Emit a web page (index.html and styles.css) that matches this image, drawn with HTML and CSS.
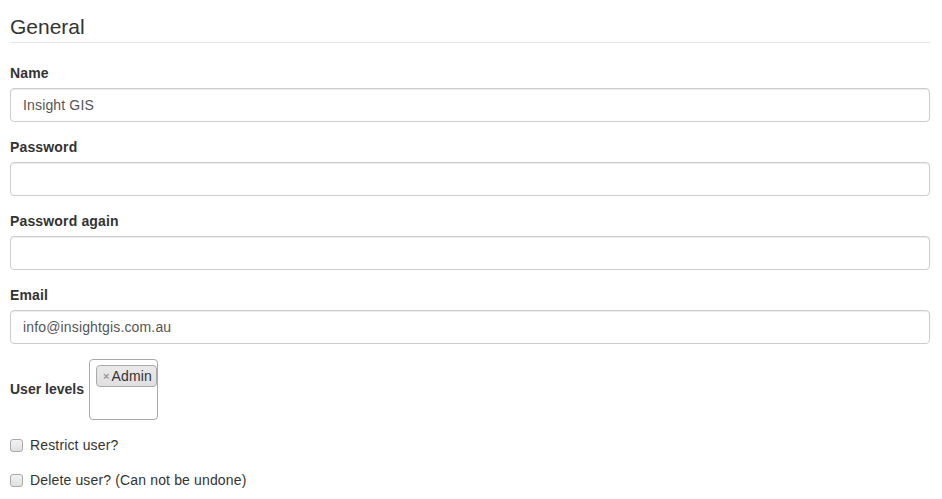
FILE: index.html
```html
<!DOCTYPE html>
<html lang="en">
<head>
<meta charset="utf-8">
<title>General</title>
<link rel="stylesheet" href="styles.css">
</head>
<body>
<form class="form">
  <fieldset class="fieldset">
    <legend class="legend">General</legend>
    <div class="form-group">
      <label class="label" for="name">Name</label>
      <input class="input" id="name" type="text" value="Insight GIS">
    </div>
    <div class="form-group">
      <label class="label" for="pw">Password</label>
      <input class="input" id="pw" type="password">
    </div>
    <div class="form-group">
      <label class="label" for="pw2">Password again</label>
      <input class="input" id="pw2" type="password">
    </div>
    <div class="form-group">
      <label class="label" for="email">Email</label>
      <input class="input" id="email" type="text" value="info@insightgis.com.au">
    </div>
    <div class="form-group inline-group">
      <span class="label inline-label">User levels</span>
      <div class="multi">
        <span class="choice"><span class="choice-x">×</span>Admin</span>
      </div>
    </div>
    <div class="form-group">
      <label class="check"><input class="checkbox" type="checkbox"><span>Restrict user?</span></label>
    </div>
    <div class="form-group">
      <label class="check"><input class="checkbox" type="checkbox"><span>Delete user? (Can not be undone)</span></label>
    </div>
  </fieldset>
</form>
</body>
</html>
```

FILE: styles.css
```css
* { box-sizing: border-box; }
html, body { margin: 0; padding: 0; background: #fff; }
body {
  font-family: "Liberation Sans", Arial, sans-serif;
  font-size: 14px;
  line-height: 20px;
  color: #333;
  letter-spacing: 0.15px;
}
.form { padding: 12px 12px 0 10px; }
.fieldset { border: 0; margin: 0; padding: 0; min-width: 0; }
.legend {
  display: block;
  width: 100%;
  padding: 0;
  margin: 0 0 20px 0;
  font-size: 21px;
  line-height: 30px;
  color: #333;
  letter-spacing: 0;
  border-bottom: 1px solid #e5e5e5;
}
.form-group { margin-bottom: 15px; }
.label {
  display: block;
  font-weight: bold;
  margin-bottom: 5px;
}
.input {
  display: block;
  width: 100%;
  height: 34px;
  padding: 6px 12px;
  font-family: inherit;
  font-size: 14px;
  line-height: 20px;
  letter-spacing: 0.15px;
  color: #555;
  background: #fff;
  border: 1px solid #ccc;
  border-radius: 4px;
  box-shadow: inset 0 1px 1px rgba(0,0,0,0.075);
  outline: none;
}
.inline-group {
  display: flex;
  align-items: center;
  gap: 5px;
}
.inline-label { margin-bottom: 0; margin-top: -1px; letter-spacing: 0; }
.multi {
  width: 69px;
  height: 61px;
  border: 1px solid #aaa;
  border-radius: 4px;
  padding: 5px 0 0 6px;
  background: #fff;
}
.choice {
  display: inline-flex;
  align-items: center;
  height: 22px;
  padding: 0 4px 0 6px;
  background: linear-gradient(#eaeaea, #e0e0e0);
  border: 1px solid #aaa;
  border-radius: 4px;
  color: #333;
  font-size: 14px;
  line-height: 20px;
  white-space: nowrap;
}
.choice-x {
  font-size: 11px;
  font-weight: bold;
  color: #999;
  margin-right: 2px;
}
.check {
  display: flex;
  align-items: center;
  min-height: 20px;
  font-weight: normal;
  cursor: pointer;
}
.checkbox {
  appearance: none;
  -webkit-appearance: none;
  width: 13px;
  height: 13px;
  margin: 0 7px 0 0;
  border: 1px solid #a9a9a9;
  border-radius: 3px;
  background: linear-gradient(#f2f2f2, #e0e0e0);
}
```
